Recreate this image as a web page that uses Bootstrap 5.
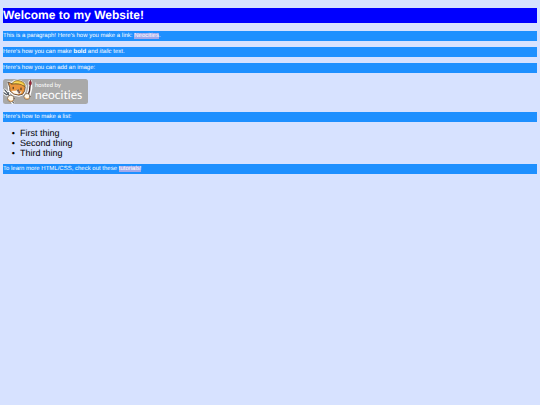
<!DOCTYPE html>
<html lang="en">
<head>
<meta charset="utf-8">
<meta name="viewport" content="width=device-width, initial-scale=1">
<title>Welcome to my Website!</title>
<link href="https://cdn.jsdelivr.net/npm/bootstrap@5.3.0/dist/css/bootstrap.min.css" rel="stylesheet">
<style>
body{background:#d7e2ff;color:#000;font-family:"Liberation Sans",Arial,sans-serif;font-size:9px;line-height:10px;text-rendering:geometricPrecision}
.site{padding:8px 3px}
.title-bar{background:#00f;font-size:12px;line-height:15px;margin-bottom:8px}
.text-bar{background:#1e90ff;color:#fff;font-size:6px;line-height:10px;margin-bottom:6px}
.text-bar a{color:#fff;background:#a3a9ea}
.host-badge{display:block;width:85px;height:25px;font-variant-ligatures:none}
.badge-link{display:block;width:fit-content;margin-bottom:8px}
.things{padding-left:17px;margin-bottom:6px}
.things li::marker{content:"•\00a0\00a0"}
</style>
</head>
<body>
<main class="site container-fluid">
<h1 class="title-bar text-white fw-bold">Welcome to my Website!</h1>
<p class="text-bar">This is a paragraph! Here's how you make a link: <a class="text-decoration-none" href="#neocities">Neocities</a>.</p>
<p class="text-bar">Here's how you can make <strong>bold</strong> and <em>italic</em> text.</p>
<p class="text-bar">Here's how you can add an image:</p>
<a class="badge-link" href="#neocities" aria-label="hosted by neocities">
<svg class="host-badge" viewBox="0 0 85 25" aria-hidden="true">
<rect width="85" height="25" rx="2.5" fill="#a9a9a9"/>
<g stroke-linejoin="round" stroke-linecap="round">
<path d="M1.8 11l3 3.2 5 9.3M.8 13.8l3 2 2-2.2" stroke="#fff" stroke-width="3" fill="none"/>
<path d="M1.8 10.8l3 3.5 5.6 9.5M.8 13.8l3 2 2-2.2" stroke="#4c545e" stroke-width="1.2" fill="none"/>
<path d="M27.3 3v6l-2 8" stroke="#fff" stroke-width="4" fill="none"/>
<path d="M27 7l-.5 5-1.5 4" stroke="#4b2b24" stroke-width="1.4" fill="none"/>
<path d="M27.5 1.5c1.5 2 1.2 3.7-.2 5.2-1.8-1.5-1.5-3.6.2-5.2z" fill="#a72335" stroke="#55202a" stroke-width=".6"/>
<path d="M5 3l4 .5C12 .5 17 .5 21 4l2 3-.5 4-1.5 4-5 2-6-1.2-4-3.8z" fill="#fff" stroke="#fff" stroke-width="1.4"/>
<path d="M5.2 3.2l4 1.5h9l4 3.5-.5 3.5-2 3.5-4 1-5-1.2-3.8-3.2-.2-3z" fill="#eb963c" stroke="#49362b" stroke-width=".8"/>
<path d="M8.2 12c2-.4 3.5 0 5-.5l1.6-1.2 1.2 1.8 3 .6-1.5 1.8-2.5.8-4-.9z" fill="#fffaf0"/>
<path d="M8.8 5C10.5 1.7 14 .8 17.5 2c3.2 1 4.8 3 4.8 5.6-4-2.7-8.5-3.3-13.5-2.6z" fill="#eabc38" stroke="#735a25" stroke-width=".7"/>
<path d="M11 3.7c3-.8 6-.2 9.2 1.8" fill="none" stroke="#ffdf63" stroke-width=".9"/>
<path d="M10.2 8.3v1.5m7.8-.8v1.7M14.2 11.2h1.5" fill="none" stroke="#35251f" stroke-width="1"/>
<path d="M15 12.5l2.3.2-1 1.5z" fill="#a93b32" stroke="#35251f" stroke-width=".5"/>
<circle cx="7.8" cy="19.5" r="3.3" fill="#fff8e9" stroke="#69503a" stroke-width=".7"/>
<circle cx="24" cy="17.5" r="3" fill="#fff8e9" stroke="#69503a" stroke-width=".7"/>
<path d="M5.5 20.5c.8 1.7 2.4 2.2 4 1.3m12.3-3.3c.8 1.5 2.4 1.9 3.8.8" fill="none" stroke="#e99d47" stroke-width=".9"/>
</g>
<g fill="#fff" font-family="Lato, sans-serif">
<text x="32" y="8" font-size="6">hosted by</text>
<text x="32" y="20" font-size="12">neocities</text>
</g>
</svg>
</a>
<p class="text-bar">Here's how to make a list:</p>
<ul class="things">
<li>First thing</li>
<li>Second thing</li>
<li>Third thing</li>
</ul>
<p class="text-bar">To learn more HTML/CSS, check out these <a class="text-decoration-none" href="#tutorials">tutorials!</a></p>
</main>
<script src="https://cdn.jsdelivr.net/npm/bootstrap@5.3.0/dist/js/bootstrap.bundle.min.js"></script>
</body>
</html>
